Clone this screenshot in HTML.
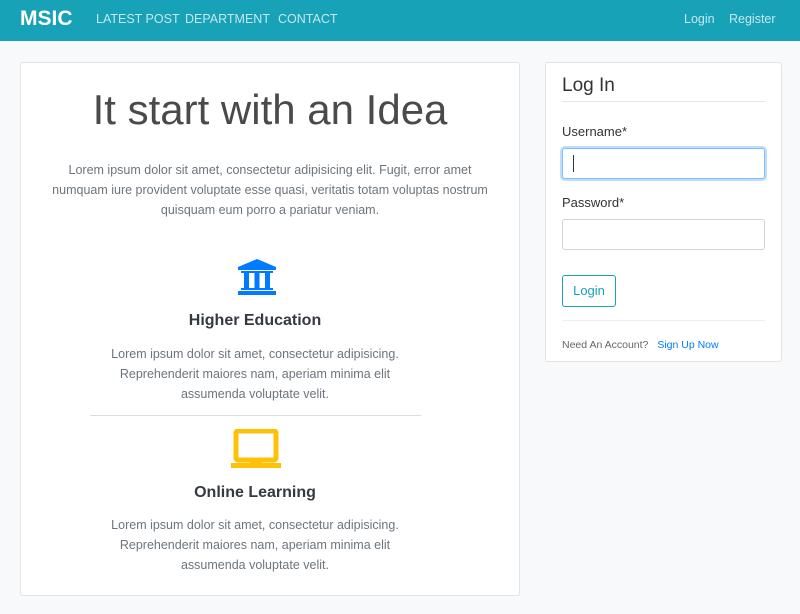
<!DOCTYPE html>
<html><head><style>
body{margin:0;background:#f8f9fa;font-family:"Liberation Sans",sans-serif;width:800px;height:614px;overflow:hidden;position:relative}
.nav{height:41px;background:#17a2b8;position:relative}
.nav span{position:absolute;top:12px;font-size:12.5px;color:rgba(255,255,255,.75);white-space:nowrap}
.brand{position:absolute;left:20px;top:7px;font-size:21px;font-weight:bold;color:#fff}
.card{position:absolute;background:#fff;border:1px solid #e3e3e3;border-radius:3px}
.c{text-align:center;position:absolute;left:0;right:0;color:#6c757d;white-space:nowrap}
.f{left:-30px}
.p{font-size:12.5px;line-height:20px}
h{position:absolute;font-weight:bold;color:#343a40;font-size:16px;left:-30px;right:0;text-align:center}
.lbl{position:absolute;left:16px;font-size:13px;color:#333}
.inp{position:absolute;left:16px;width:201px;height:29px;border:1px solid #ced4da;border-radius:3px;background:#fff}
</style></head><body>
<div class="nav">
<div class="brand">MSIC</div>
<span style="left:96px">LATEST POST</span>
<span style="left:185px">DEPARTMENT</span>
<span style="left:278px">CONTACT</span>
<span style="left:684px">Login</span>
<span style="left:729px">Register</span>
</div>
<div class="card" style="left:20px;top:62px;width:498px;height:532px">
<div class="c" style="top:22px;font-size:42px;color:#4a4a4a;line-height:50px">It start with an Idea</div>
<div class="c p" style="top:97px">Lorem ipsum dolor sit amet, consectetur adipisicing elit. Fugit, error amet<br>numquam iure provident voluptate esse quasi, veritatis totam voluptas nostrum<br>quisquam eum porro a pariatur veniam.</div>
<svg style="position:absolute;left:217px;top:196px" width="38" height="36" viewBox="0 0 38 36"><polygon points="19,0 38,8 38,11 0,11 0,8" fill="#007bff"/><rect x="3" y="12" width="32" height="2" fill="#007bff"/><rect x="6" y="14" width="5" height="15" fill="#007bff"/><rect x="16.5" y="14" width="5" height="15" fill="#007bff"/><rect x="27" y="14" width="5" height="15" fill="#007bff"/><rect x="3" y="29" width="32" height="2" fill="#007bff"/><rect x="0" y="32" width="38" height="4" fill="#007bff"/></svg>
<h style="top:249px">Higher Education</h>
<div class="c p f" style="top:281px">Lorem ipsum dolor sit amet, consectetur adipisicing.<br>Reprehenderit maiores nam, aperiam minima elit<br>assumenda voluptate velit.</div>
<div style="position:absolute;left:69px;width:331px;top:352px;border-top:1px solid #ddd"></div>
<svg style="position:absolute;left:210px;top:366px" width="50" height="40" viewBox="0 0 50 40"><rect x="5" y="2" width="40" height="29" rx="2" fill="none" stroke="#ffc107" stroke-width="5"/><rect x="0" y="34" width="50" height="5" fill="#ffc107"/><rect x="19" y="29" width="12" height="6" fill="#ffc107"/></svg>
<h style="top:421px">Online Learning</h>
<div class="c p f" style="top:452px">Lorem ipsum dolor sit amet, consectetur adipisicing.<br>Reprehenderit maiores nam, aperiam minima elit<br>assumenda voluptate velit.</div>
</div>
<div class="card" style="left:545px;top:62px;width:235px;height:298px">
<div style="position:absolute;left:16px;top:12px;font-size:19px;color:#333">Log In</div>
<div style="position:absolute;left:16px;right:16px;top:38px;border-top:1px solid #e5e5e5"></div>
<div class="lbl" style="top:61px">Username*</div>
<div class="inp" style="top:85px;border-color:#80bdff;box-shadow:0 0 0 2px rgba(0,123,255,.25)"><div style="position:absolute;left:10px;top:6px;width:1px;height:17px;background:#333"></div></div>
<div class="lbl" style="top:132px">Password*</div>
<div class="inp" style="top:156px"></div>
<div style="position:absolute;left:16px;top:212px;width:52px;height:30px;border:1px solid #17a2b8;border-radius:3px;color:#17a2b8;font-size:13px;text-align:center;line-height:30px">Login</div>
<div style="position:absolute;left:16px;right:16px;top:257px;border-top:1px solid #eee"></div>
<div style="position:absolute;left:16px;top:276px;font-size:10.5px;color:#666">Need An Account? <span style="color:#007bff;margin-left:6px">Sign Up Now</span></div>
</div>
</body></html>
